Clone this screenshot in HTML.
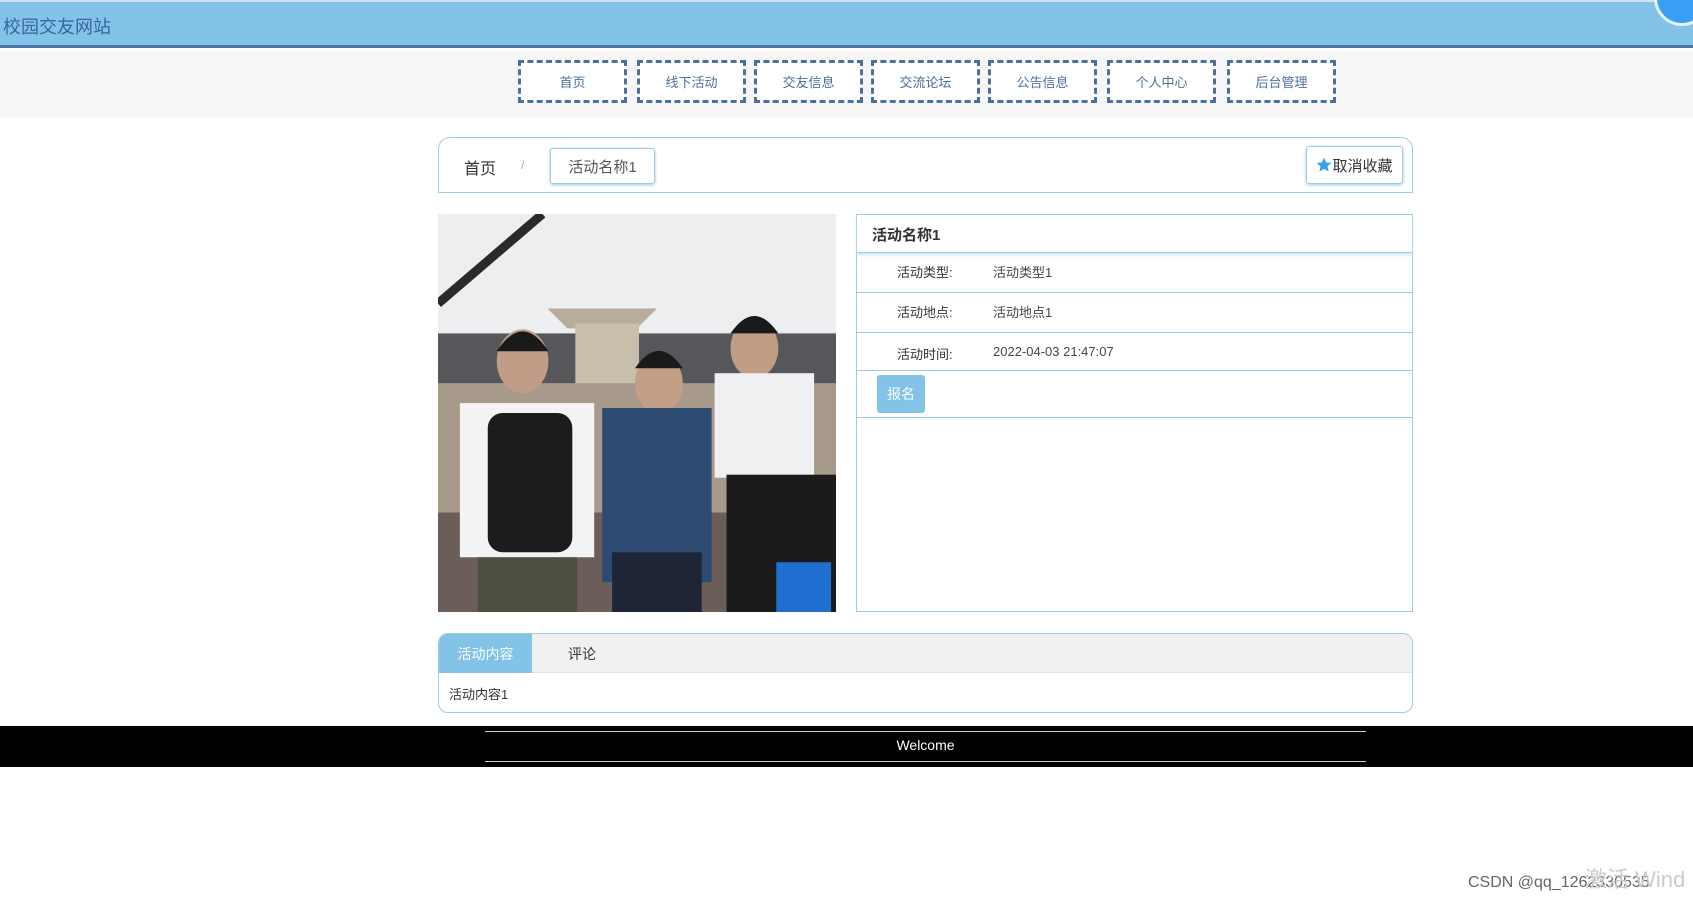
<!DOCTYPE html>
<html><head><meta charset="utf-8"><style>
*{margin:0;padding:0;box-sizing:border-box}
body{width:1693px;height:905px;background:#fff;font-family:"Liberation Sans","Noto Sans CJK SC",sans-serif;position:relative;overflow:hidden;color:#333}
.abs{position:absolute}
.hdr{left:0;top:0;width:1693px;height:48px;background:#82c3e7;border-top:2px solid #cfe3ee;border-bottom:3px solid #4a74a8}
.hdr span{position:absolute;left:3px;top:11px;font-size:18px;color:#3a64a0}
.circ{left:1654px;top:-30px;width:56px;height:56px;border-radius:50%;background:#3aa0f5;border:3px solid #e6f3fb}
.navband{left:0;top:51px;width:1693px;height:66px;background:#f6f6f7}
.nb{top:60px;width:109px;height:43px;border:3px dashed #4d6f9c;font-size:13px;color:#4d6f9c;display:flex;align-items:center;justify-content:center;background:#fff}
.crumb{left:438px;top:137px;width:975px;height:56px;border:1px solid #9ccbe3;border-radius:12px 12px 0 0}
.b1{left:464px;top:155px;font-size:16px;color:#333}
.sl{left:521px;top:158px;font-size:12px;color:#aaa}
.b2{left:550px;top:148px;width:105px;height:36px;border:1px solid #9ccbe3;border-radius:3px;box-shadow:0 1px 3px #9cc8e0;font-size:15px;color:#555;display:flex;align-items:center;justify-content:center}
.fav{left:1306px;top:146px;width:97px;height:38px;border:1px solid #9ccbe3;border-radius:3px;box-shadow:0 1px 3px #9cc8e0;font-size:15px;color:#333;display:flex;align-items:center;justify-content:center}
.info{left:856px;top:214px;width:557px;height:398px;border:1px solid #9ccbe3}
.row{position:absolute;left:0;width:555px;border-bottom:1px solid #9ccbe3;font-size:13px}
.row .k{position:absolute;left:40px}
.row .v{position:absolute;left:136px;color:#444}
.btn{left:877px;top:375px;width:48px;height:38px;background:#82c3e7;border-radius:3px;color:#fff;font-size:14px;display:flex;align-items:center;justify-content:center}
.tabs{left:438px;top:633px;width:975px;height:80px;border:1px solid #9ccbe3;border-radius:10px;overflow:hidden}
.th{position:absolute;left:0;top:0;width:975px;height:39px;background:#f0f0f0;border-bottom:1px solid #e3e3e3}
.t1{position:absolute;left:0;top:0;width:93px;height:39px;background:#82c3e7;color:#fff;font-size:14px;display:flex;align-items:center;justify-content:center}
.t2{position:absolute;left:129px;top:10px;font-size:14px;color:#333}
.foot{left:0;top:726px;width:1693px;height:41px;background:#000}
.ln{left:485px;width:881px;height:1px;background:#ccc}
</style></head><body>
<div class="abs hdr"><span>校园交友网站</span></div>
<div class="abs circ"></div>
<div class="abs navband"></div>
<div class="abs nb" style="left:518px">首页</div>
<div class="abs nb" style="left:637px">线下活动</div>
<div class="abs nb" style="left:754px">交友信息</div>
<div class="abs nb" style="left:871px">交流论坛</div>
<div class="abs nb" style="left:988px">公告信息</div>
<div class="abs nb" style="left:1107px">个人中心</div>
<div class="abs nb" style="left:1227px">后台管理</div>
<div class="abs crumb"></div>
<div class="abs b1">首页</div>
<div class="abs sl">/</div>
<div class="abs b2">活动名称1</div>
<div class="abs fav"><svg width="16" height="16" viewBox="0 0 24 24"><path d="M12 1l3.3 7 7.7.9-5.7 5.2 1.6 7.6L12 17.9 5.1 21.7l1.6-7.6L1 8.9l7.7-.9z" fill="#3aa0e8"/></svg>取消收藏</div>
<svg class="abs" style="left:438px;top:214px" width="398" height="398" viewBox="0 0 400 400">
<rect width="400" height="400" fill="#eceef0"/>
<rect y="120" width="400" height="55" fill="#55575b"/>
<polygon points="110,95 220,95 200,115 130,115" fill="#b8ad9a"/>
<rect x="138" y="110" width="64" height="90" fill="#c8beac"/>
<rect y="170" width="400" height="140" fill="#a89a8a"/>
<rect y="300" width="400" height="100" fill="#6b5e58"/>
<path d="M0 90 L105 0" stroke="#2a2a2a" stroke-width="9"/>
<ellipse cx="85" cy="148" rx="26" ry="32" fill="#c19c86"/><path d="M59 138 q26 -40 52 0" fill="#1a1a1a"/>
<rect x="22" y="190" width="135" height="155" fill="#f3f3f3"/>
<rect x="50" y="200" width="85" height="140" rx="15" fill="#1c1c1e"/>
<rect x="40" y="345" width="100" height="55" fill="#4b5043"/>
<ellipse cx="222" cy="170" rx="24" ry="30" fill="#c49f86"/><path d="M198 155 q24 -35 48 0" fill="#1a1a1a"/>
<rect x="165" y="195" width="110" height="175" fill="#2c4a72"/><rect x="175" y="340" width="90" height="60" fill="#1e2536"/>
<ellipse cx="318" cy="135" rx="24" ry="30" fill="#c29d86"/><path d="M294 120 q24 -35 48 0" fill="#1a1a1a"/>
<rect x="278" y="160" width="100" height="105" fill="#f0f0f2"/>
<rect x="290" y="262" width="110" height="138" fill="#1b1b1d"/>
<rect x="340" y="350" width="55" height="50" fill="#1f6fd0"/>
</svg>
<div class="abs info">
<div class="row" style="top:0;height:38px;box-shadow:0 2px 3px #cfe6f2"><span class="k" style="left:15px;top:9px;font-size:15px;color:#333;font-weight:bold">活动名称1</span></div>
<div class="row" style="top:38px;height:40px"><span class="k" style="top:9px">活动类型:</span><span class="v" style="top:9px">活动类型1</span></div>
<div class="row" style="top:78px;height:40px"><span class="k" style="top:9px">活动地点:</span><span class="v" style="top:9px">活动地点1</span></div>
<div class="row" style="top:118px;height:38px"><span class="k" style="top:11px">活动时间:</span><span class="v" style="top:11px">2022-04-03 21:47:07</span></div>
<div class="row" style="top:156px;height:47px"></div>
</div>
<div class="abs btn">报名</div>
<div class="abs tabs"><div class="th"><div class="t1">活动内容</div><div class="t2">评论</div></div><div style="position:absolute;left:10px;top:50px;font-size:13px;color:#333">活动内容1</div></div>
<div class="abs foot"></div>
<div class="abs ln" style="top:731px"></div>
<div class="abs ln" style="top:761px"></div>
<div class="abs" style="left:485px;width:881px;top:737px;text-align:center;color:#fff;font-size:14px">Welcome</div>
<div class="abs" style="left:1468px;top:874px;font-size:16px;color:#666">CSDN @qq_1262330535</div>
<div class="abs" style="left:1585px;top:862px;font-size:22px;color:#ccc">激活 Wind</div>
</body></html>
